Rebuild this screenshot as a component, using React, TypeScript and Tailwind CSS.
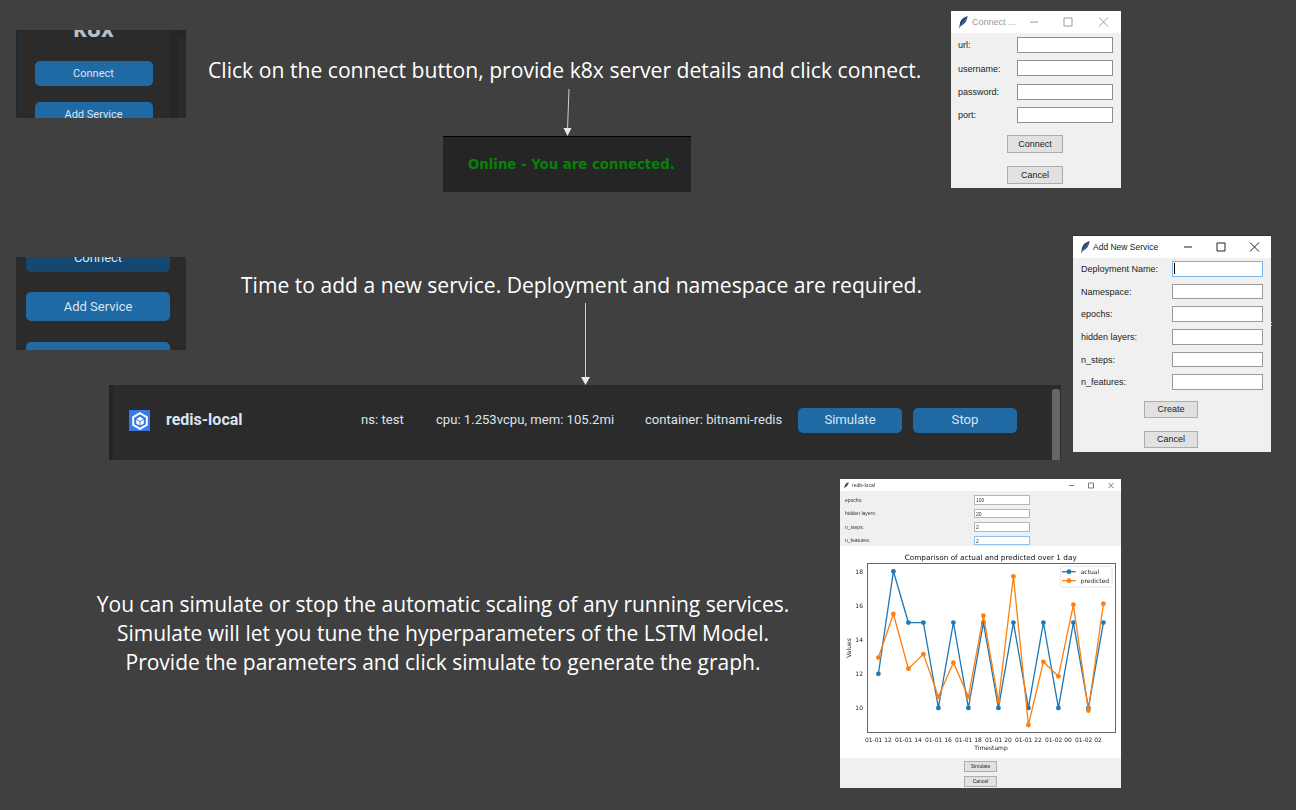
const Feather = ({ size = 13 }: { size?: number }) => (
  <svg width={size} height={size} viewBox="0 0 12 12" className="shrink-0">
    <path d="M9.8 0.3 C6.2 0.8 3 3.8 2.6 7.4 L1.9 11.7 L3.4 8.9 C6.8 8.4 9.2 4.6 9.8 0.3 Z" fill="#24466f" />
    <path d="M8.6 2 L3 10" stroke="#6f8fb5" strokeWidth="0.6" />
  </svg>
);

const TitleBar = ({ title, dim, controls }: { title: string; dim?: boolean; controls: string }) => (
  <div className="h-[22px] bg-white flex items-center pl-[6px] shrink-0">
    <Feather />
    <span className={dim ? "ml-[2px] pt-[1px] text-[9px] whitespace-nowrap text-[#999999]" : "ml-[1px] text-[8.5px] whitespace-nowrap text-[#222222]"}>{title}</span>
    <svg width="84" height="12" viewBox="0 0 84 12" className="ml-auto mr-[9px] shrink-0">
      <path d={controls} fill="none" stroke={dim ? "#9a9a9a" : "#222222"} strokeWidth="1" />
    </svg>
  </div>
);

const SmallTitleBar = ({ title }: { title: string }) => (
  <div className="h-3 bg-white flex items-center pl-[3px] shrink-0">
    <Feather size={7} />
    <span className="ml-[2px] pt-[1px] text-[5px] text-[#333333]">{title}</span>
    <svg width="60" height="10" viewBox="0 0 60 10" className="ml-auto shrink-0">
      <path d="M8 5.5H13M27.5 3H32.5V8H27.5ZM47.5 3L52.5 8M52.5 3L47.5 8" fill="none" stroke="#444444" strokeWidth="0.7" />
    </svg>
  </div>
);

const TkButton = ({ label, className }: { label: string; className: string }) => (
  <div className={`flex items-center justify-center pt-[1px] bg-[#e1e1e1] border border-[#adadad] text-[#222222] shrink-0 ${className}`}>{label}</div>
);

const ConnectWindow = () => (
  <div className="absolute left-[951px] top-[11px] w-[170px] h-[177px] bg-[#f0f0f0] flex flex-col font-['Liberation_Sans',sans-serif] text-[9px] text-[#222222]">
    <TitleBar title="Connect ..." dim controls="M2 6H10M36 2H44V10H36ZM71 1.5L80 10.5M80 1.5L71 10.5" />
    <div className="flex flex-col gap-[7.4px] mt-[4px]">
      {["url:", "username:", "password:", "port:"].map((label) => (
        <div key={label} className="flex items-center h-[16px] pl-[7px] pr-[8px]">
          <span className="w-[59px] pt-[2px]">{label}</span>
          <div className="flex-1 h-full bg-white border border-[#8f8f8f]"></div>
        </div>
      ))}
    </div>
    <TkButton label="Connect" className="ml-[56px] w-[56px] h-[18px] mt-[12px]" />
    <TkButton label="Cancel" className="ml-[56px] w-[56px] h-[18px] mt-[13px]" />
  </div>
);

const serviceFields = ["Deployment Name:", "Namespace:", "epochs:", "hidden layers:", "n_steps:", "n_features:"];

const ServiceWindow = () => (
  <div className="absolute left-[1073px] top-[235px] w-[198px] h-[217px] bg-[#f0f0f0] border-t border-[#2e2e2e] flex flex-col font-['Liberation_Sans',sans-serif] text-[9px] text-[#222222]">
    <TitleBar title="Add New Service" controls="M6 6H14M39 2H47V10H39ZM72 1.5L81 10.5M81 1.5L72 10.5" />
    <div className="flex flex-col gap-[7.2px] mt-[3px]">
      {serviceFields.map((label, i) => (
        <div key={label} className="flex items-center h-[15.5px] pl-[8px] pr-[8px]">
          <span className="w-[91px] pt-[2px]">{label}</span>
          {i === 0 ? (
            <div className="flex-1 h-full bg-white border border-[#7ab4e6] flex items-center pl-[1px]">
              <div className="w-px h-[11px] bg-black"></div>
            </div>
          ) : (
            <div className="flex-1 h-full bg-white border border-[#9a9a9a]"></div>
          )}
        </div>
      ))}
    </div>
    <TkButton label="Create" className="ml-[71px] w-[54px] h-[17px] mt-[11px]" />
    <TkButton label="Cancel" className="ml-[71px] w-[54px] h-[17px] mt-[13px]" />
  </div>
);

const simFields = [
  { label: "epochs:", value: "100" },
  { label: "hidden layers:", value: "20" },
  { label: "n_steps:", value: "2" },
  { label: "n_features:", value: "2" },
];

const actual = [12, 18, 15, 15, 10, 15, 10, 15, 10, 15, 10, 15, 10, 15, 10, 15];
const predicted = [12.95, 15.5, 12.3, 13.15, 10.65, 12.65, 10.65, 15.4, 10.4, 17.7, 9, 12.7, 11.85, 16.05, 9.85, 16.1];
const xAt = (i: number) => 38.4 + i * 15;
const yAt = (v: number) => 25.3 + (18 - v) * 17.08;
const points = (vals: number[]) => vals.map((v, i) => `${xAt(i)},${yAt(v)}`).join(" ");
const ticks = ["01-01 12", "01-01 14", "01-01 16", "01-01 18", "01-01 20", "01-01 22", "01-02 00", "01-02 02"];

const Chart = () => (
  <svg width="281" height="212" viewBox="0 0 281 212" className="block font-['DejaVu_Sans',sans-serif]">
    <text x="150.7" y="13.5" textAnchor="middle" fontSize="7.3" fill="#111111">Comparison of actual and predicted over 1 day</text>
    <rect x="27.5" y="17.5" width="248" height="169" fill="white" stroke="#666666" strokeWidth="1" />
    {[18, 16, 14, 12, 10].map((v) => (
      <text key={v} x="23" y={yAt(v) + 2.5} textAnchor="end" fontSize="6" fill="#222222">{v}</text>
    ))}
    {ticks.map((t, i) => (
      <text key={t} x={38.4 + i * 30} y="195.5" textAnchor="middle" fontSize="6" fill="#222222">{t}</text>
    ))}
    <text x="151" y="204" textAnchor="middle" fontSize="6" fill="#222222">Timestamp</text>
    <text x="0" y="0" transform="translate(10.5 102) rotate(-90)" textAnchor="middle" fontSize="6" fill="#222222">Values</text>
    <polyline points={points(actual)} fill="none" stroke="#1f77b4" strokeWidth="1.3" />
    {actual.map((v, i) => <circle key={i} cx={xAt(i)} cy={yAt(v)} r="2.4" fill="#1f77b4" />)}
    <polyline points={points(predicted)} fill="none" stroke="#ff7f0e" strokeWidth="1.3" />
    {predicted.map((v, i) => <circle key={i} cx={xAt(i)} cy={yAt(v)} r="2.4" fill="#ff7f0e" />)}
    <rect x="220.7" y="20.3" width="51.3" height="20.7" rx="1.5" fill="white" stroke="#dddddd" strokeWidth="0.7" />
    <path d="M222 25.7H235.7" stroke="#1f77b4" strokeWidth="1.3" />
    <circle cx="229" cy="25.7" r="2.4" fill="#1f77b4" />
    <text x="240.7" y="28" fontSize="6" fill="#222222">actual</text>
    <path d="M222 34.7H235.7" stroke="#ff7f0e" strokeWidth="1.3" />
    <circle cx="229" cy="34.7" r="2.4" fill="#ff7f0e" />
    <text x="240.7" y="37" fontSize="6" fill="#222222">predicted</text>
  </svg>
);

const SimulateWindow = () => (
  <div className="absolute left-[840px] top-[479px] w-[281px] h-[309px] bg-[#f0f0f0] flex flex-col blur-[0.4px] font-['Liberation_Sans',sans-serif] text-[5px] text-[#333333]">
    <SmallTitleBar title="redis-local" />
    <div className="flex flex-col gap-[4px] pt-[4px] h-[55px] shrink-0">
      {simFields.map((f, i) => (
        <div key={f.label} className="flex items-center h-[9.5px] pl-[5px]">
          <span className="w-[129px] pt-[1px]">{f.label}</span>
          <div className={i === 3 ? "w-[56px] h-full bg-white border border-[#8fc0ea] pl-[1px] leading-[8px]" : "w-[56px] h-full bg-white border border-[#b5b5b5] pl-[1px] leading-[8px]"}>{f.value}</div>
        </div>
      ))}
    </div>
    <div className="bg-white h-[212px] shrink-0">
      <Chart />
    </div>
    <TkButton label="Simulate" className="ml-[124px] w-[33px] h-[11px] mt-[3px]" />
    <TkButton label="Cancel" className="ml-[124px] w-[33px] h-[11px] mt-[4px]" />
  </div>
);

const Btn = ({ label, className }: { label: string; className: string }) => (
  <div className={`flex items-center justify-center rounded-[5px] text-[#dce4ee] shrink-0 ${className}`}>{label}</div>
);

const ConnectPanel = () => (
  <div className="absolute left-[16px] top-[30px] w-[170px] h-[88px] overflow-hidden bg-[#2b2b2b] border-l border-[#1d2a33] flex font-['Roboto',sans-serif]">
    <div className="w-[153px] flex flex-col items-center shrink-0">
      <div className="h-[8px] w-full overflow-hidden flex items-end justify-center shrink-0">
        <span className="text-[25px] leading-[18px] font-bold text-[#b8bec5]">k8x</span>
      </div>
      <Btn label="Connect" className="mt-[23px] w-[118px] h-[25px] pt-[2px] text-[11px] bg-[#1f6aa5]" />
      <Btn label="Add Service" className="mt-[16px] w-[118px] h-[25px] pt-[2px] text-[11px] bg-[#1f6aa5]" />
    </div>
    <div className="flex-1 bg-[#262626] pl-[8px] pt-[7px]">
      <div className="h-full bg-[#2a2a2a]"></div>
    </div>
  </div>
);

const ServicePanel = () => (
  <div className="absolute left-[16px] top-[257px] w-[170px] h-[93px] overflow-hidden bg-[#2b2b2b] flex flex-col items-start pl-[10px] font-['Roboto',sans-serif]">
    <Btn label="Connect" className="-mt-[14px] w-[144px] h-[29px] text-[13px] bg-[#144870]" />
    <Btn label="Add Service" className="mt-[20px] w-[144px] h-[29px] text-[13px] bg-[#1f6aa5]" />
    <Btn label="Stop" className="mt-[21px] w-[144px] h-[29px] text-[13px] bg-[#1f6aa5]" />
  </div>
);

const StatusBar = () => (
  <div className="absolute left-[443px] top-[136px] w-[248px] h-[56px] bg-[#252525] border-t border-black flex items-center pl-[25px] font-['DejaVu_Sans',sans-serif] font-bold text-[13.3px] text-[#088008]">
    Online - You are connected.
  </div>
);

const ServiceRow = () => (
  <div className="absolute left-[109px] top-[385px] w-[952px] h-[75px] bg-[#2b2b2b] border-l-4 border-[#242424] pt-[23px] font-['Roboto',sans-serif] text-[13.1px] text-[#dce4ee]">
    <div className="flex items-center h-[25px]">
      <div className="ml-[16px] w-[21px] h-[21px] bg-[#3b78e7] flex items-center justify-center shrink-0">
        <svg width="18" height="18" viewBox="0 0 18 18">
          <path d="M9 1.2L15.8 5.1V12.9L9 16.8L2.2 12.9V5.1Z" fill="none" stroke="white" strokeWidth="1.9" />
          <path d="M9 4.8L12.6 6.9L9 9L5.4 6.9Z" fill="white" />
          <path d="M5.2 7.8L8.5 9.7V13.4L5.2 11.5ZM12.8 7.8L9.5 9.7V13.4L12.8 11.5Z" fill="white" />
        </svg>
      </div>
      <span className="ml-[16px] w-[195px] pb-[2px] text-[16px] font-bold">redis-local</span>
      <span className="w-[75px] pb-[2px]">ns: test</span>
      <span className="w-[209px] pb-[2px]">cpu: 1.253vcpu, mem: 105.2mi</span>
      <span className="w-[153px] pb-[2px]">container: bitnami-redis</span>
      <Btn label="Simulate" className="w-[104px] h-[25px] pb-[2px] bg-[#1f6aa5]" />
      <Btn label="Stop" className="ml-[11px] w-[104px] h-[25px] pb-[2px] bg-[#1f6aa5]" />
    </div>
    <div className="absolute right-[1px] bottom-0 w-[8px] h-[71px] rounded-t-[3px] bg-[#666666]"></div>
  </div>
);

const App = () => {
  return (
    <div className="relative w-[1296px] h-[810px] overflow-hidden bg-[#404040] font-['Open_Sans',sans-serif] text-white">
      <ConnectPanel />
      <p className="absolute left-[208px] top-[55px] text-[21.15px] leading-[29px] whitespace-nowrap">Click on the connect button, provide k8x server details and click connect.</p>
      <svg className="absolute left-[560px] top-[88px]" width="16" height="49" viewBox="0 0 16 49">
        <path d="M9 1L7.5 42" stroke="#cfcfcf" strokeWidth="1" />
        <path d="M3.5 40H11.5L7.5 48Z" fill="#e8e8e8" />
      </svg>
      <StatusBar />
      <ConnectWindow />

      <ServicePanel />
      <p className="absolute left-[241px] top-[270px] text-[21.1px] leading-[29px] whitespace-nowrap">Time to add a new service. Deployment and namespace are required.</p>
      <svg className="absolute left-[577px] top-[303px]" width="16" height="83" viewBox="0 0 16 83">
        <path d="M8.5 0V76" stroke="#cfcfcf" strokeWidth="1" />
        <path d="M4 74H13L8.5 82Z" fill="#e8e8e8" />
      </svg>
      <ServiceRow />
      <ServiceWindow />
      <div className="absolute left-[1271px] top-[322px] flex flex-col gap-[2px]">
        <div className="w-px h-[1px] bg-[#bbbbbb]"></div>
        <div className="w-px h-[1px] bg-[#bbbbbb]"></div>
      </div>

      <div className="absolute left-[43px] top-[590px] w-[800px] text-center text-[21px] leading-[29px]">
        <p>You can simulate or stop the automatic scaling of any running services.</p>
        <p>Simulate will let you tune the hyperparameters of the LSTM Model.</p>
        <p>Provide the parameters and click simulate to generate the graph.</p>
      </div>
      <SimulateWindow />
    </div>
  );
};

export default App;
